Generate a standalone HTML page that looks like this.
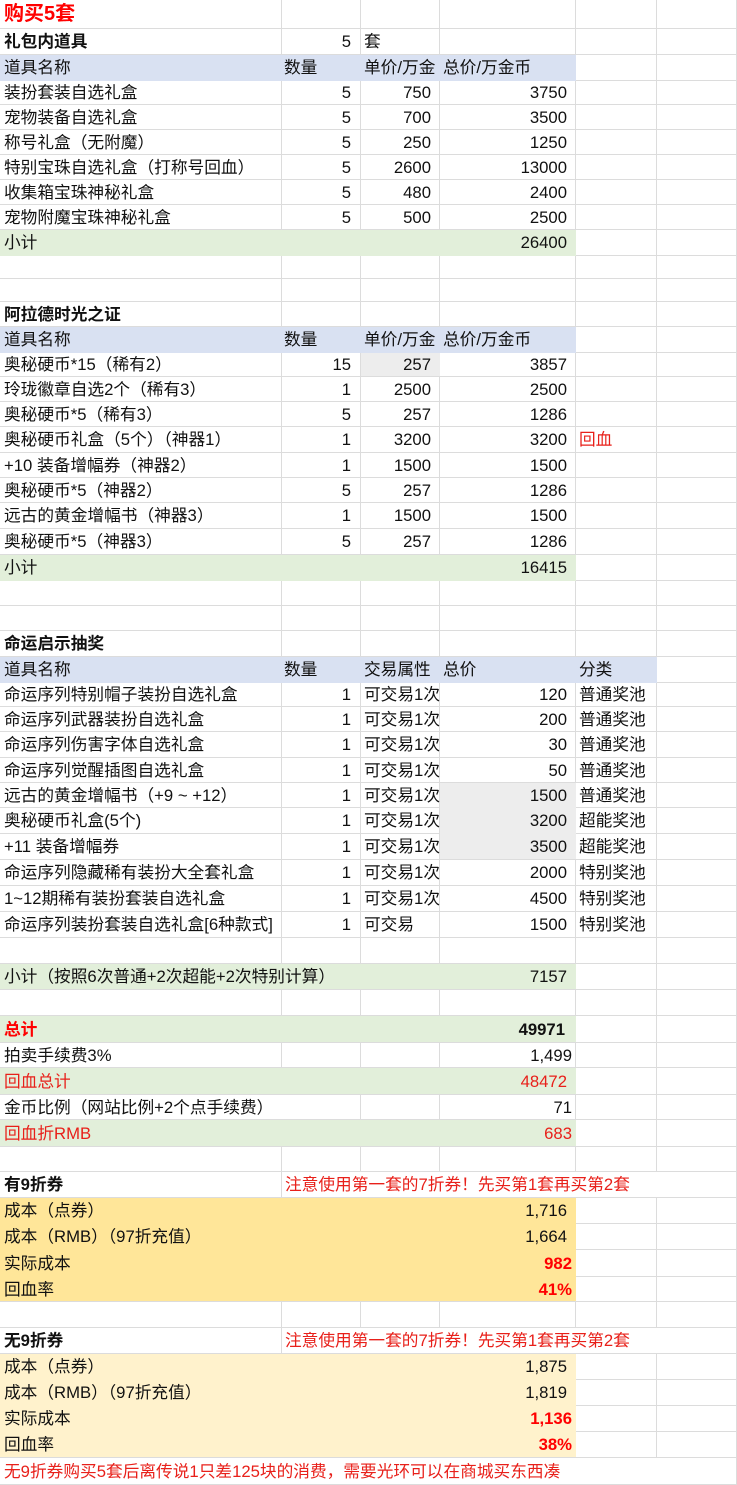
<!DOCTYPE html>
<html><head><meta charset="utf-8"><style>
*{margin:0;padding:0;box-sizing:border-box}
body{width:737px;height:1485px;position:relative;background:#fff;overflow:hidden;font-family:"Liberation Sans","Noto Sans CJK SC",sans-serif;font-size:16.7px;color:#111}
.v{position:absolute;top:0;width:1px;height:1485px;background:#dcdcdc}
.r{position:absolute;left:0;width:737px;border-bottom:1px solid #dcdcdc}
.r span{position:absolute;top:0;white-space:nowrap}
.bg{position:absolute;top:0;left:0;height:calc(100% + 1px);width:576px}
.g{background:#e2efda}.b{background:#d9e1f2}.o{background:#ffe699}.y{background:#fff2cc}.w{background:#fff;height:100%}
.bb{width:657px}
.gr3{position:absolute;top:0;height:100%;left:361px;width:79px;background:#ededed}
.gr4{position:absolute;top:0;height:calc(100% + 1px);left:440px;width:136px;background:#ededed}
.L{left:4px}.Q{right:386px}.C3{left:364px}.P{right:306px}.T{right:170px}.T2{right:165px}.C2{left:284px}.C4{left:443px}.C5{left:579px}.N{left:285px}
.bd{font-weight:bold}.red{color:#e8201a}.R{color:#ff0000;font-weight:bold}
</style></head><body>
<div class="v" style="left:281px"></div><div class="v" style="left:360px"></div><div class="v" style="left:439px"></div><div class="v" style="left:575px"></div><div class="v" style="left:656px"></div><div class="v" style="left:736px"></div>

<div class="r" style="top:0;height:29px;line-height:29px"><span class="L R" style="font-size:20px">购买5套</span></div>
<div class="r" style="top:29px;height:26px;line-height:26px"><span class="L bd">礼包内道具</span><span class="Q">5</span><span class="C3">套</span></div>
<div class="r" style="top:55px;height:26px;line-height:26px"><div class="bg b"></div><span class="L">道具名称</span><span class="C2">数量</span><span class="C3">单价/万金</span><span class="C4">总价/万金币</span></div>
<div class="r" style="top:81px;height:24px;line-height:24px"><span class="L">装扮套装自选礼盒</span><span class="Q">5</span><span class="P">750</span><span class="T">3750</span></div>
<div class="r" style="top:105px;height:25px;line-height:25px"><span class="L">宠物装备自选礼盒</span><span class="Q">5</span><span class="P">700</span><span class="T">3500</span></div>
<div class="r" style="top:130px;height:25px;line-height:25px"><span class="L">称号礼盒（无附魔）</span><span class="Q">5</span><span class="P">250</span><span class="T">1250</span></div>
<div class="r" style="top:155px;height:25px;line-height:25px"><span class="L">特别宝珠自选礼盒（打称号回血）</span><span class="Q">5</span><span class="P">2600</span><span class="T">13000</span></div>
<div class="r" style="top:180px;height:25px;line-height:25px"><span class="L">收集箱宝珠神秘礼盒</span><span class="Q">5</span><span class="P">480</span><span class="T">2400</span></div>
<div class="r" style="top:205px;height:25px;line-height:25px"><span class="L">宠物附魔宝珠神秘礼盒</span><span class="Q">5</span><span class="P">500</span><span class="T">2500</span></div>
<div class="r" style="top:230px;height:26px;line-height:26px"><div class="bg g"></div><span class="L">小计</span><span class="T">26400</span></div>
<div class="r" style="top:256px;height:23px"></div>
<div class="r" style="top:279px;height:23px"></div>
<div class="r" style="top:302px;height:25px;line-height:25px"><span class="L bd">阿拉德时光之证</span></div>
<div class="r" style="top:327px;height:26px;line-height:26px"><div class="bg b"></div><span class="L">道具名称</span><span class="C2">数量</span><span class="C3">单价/万金</span><span class="C4">总价/万金币</span></div>
<div class="r" style="top:353px;height:24px;line-height:24px"><div class="gr3"></div><span class="L">奥秘硬币*15（稀有2）</span><span class="Q">15</span><span class="P">257</span><span class="T">3857</span></div>
<div class="r" style="top:377px;height:25px;line-height:25px"><span class="L">玲珑徽章自选2个（稀有3）</span><span class="Q">1</span><span class="P">2500</span><span class="T">2500</span></div>
<div class="r" style="top:402px;height:25px;line-height:25px"><span class="L">奥秘硬币*5（稀有3）</span><span class="Q">5</span><span class="P">257</span><span class="T">1286</span></div>
<div class="r" style="top:427px;height:26px;line-height:26px"><span class="L">奥秘硬币礼盒（5个）（神器1）</span><span class="Q">1</span><span class="P">3200</span><span class="T">3200</span><span class="C5 red">回血</span></div>
<div class="r" style="top:453px;height:25px;line-height:25px"><span class="L">+10 装备增幅券（神器2）</span><span class="Q">1</span><span class="P">1500</span><span class="T">1500</span></div>
<div class="r" style="top:478px;height:25px;line-height:25px"><span class="L">奥秘硬币*5（神器2）</span><span class="Q">5</span><span class="P">257</span><span class="T">1286</span></div>
<div class="r" style="top:503px;height:26px;line-height:26px"><span class="L">远古的黄金增幅书（神器3）</span><span class="Q">1</span><span class="P">1500</span><span class="T">1500</span></div>
<div class="r" style="top:529px;height:26px;line-height:26px"><span class="L">奥秘硬币*5（神器3）</span><span class="Q">5</span><span class="P">257</span><span class="T">1286</span></div>
<div class="r" style="top:555px;height:26px;line-height:26px"><div class="bg g"></div><span class="L">小计</span><span class="T">16415</span></div>
<div class="r" style="top:581px;height:25px"></div>
<div class="r" style="top:606px;height:25px"></div>
<div class="r" style="top:631px;height:26px;line-height:26px"><span class="L bd">命运启示抽奖</span></div>
<div class="r" style="top:657px;height:26px;line-height:26px"><div class="bg b bb"></div><span class="L">道具名称</span><span class="C2">数量</span><span class="C3">交易属性</span><span class="C4">总价</span><span class="C5">分类</span></div>
<div class="r" style="top:683px;height:24px;line-height:24px"><span class="L">命运序列特别帽子装扮自选礼盒</span><span class="Q">1</span><span class="C3">可交易1次</span><span class="T">120</span><span class="C5">普通奖池</span></div>
<div class="r" style="top:707px;height:25px;line-height:25px"><span class="L">命运序列武器装扮自选礼盒</span><span class="Q">1</span><span class="C3">可交易1次</span><span class="T">200</span><span class="C5">普通奖池</span></div>
<div class="r" style="top:732px;height:26px;line-height:26px"><span class="L">命运序列伤害字体自选礼盒</span><span class="Q">1</span><span class="C3">可交易1次</span><span class="T">30</span><span class="C5">普通奖池</span></div>
<div class="r" style="top:758px;height:25px;line-height:25px"><span class="L">命运序列觉醒插图自选礼盒</span><span class="Q">1</span><span class="C3">可交易1次</span><span class="T">50</span><span class="C5">普通奖池</span></div>
<div class="r" style="top:783px;height:25px;line-height:25px"><div class="gr4"></div><span class="L">远古的黄金增幅书（+9 ~ +12）</span><span class="Q">1</span><span class="C3">可交易1次</span><span class="T">1500</span><span class="C5">普通奖池</span></div>
<div class="r" style="top:808px;height:26px;line-height:26px"><div class="gr4"></div><span class="L">奥秘硬币礼盒(5个)</span><span class="Q">1</span><span class="C3">可交易1次</span><span class="T">3200</span><span class="C5">超能奖池</span></div>
<div class="r" style="top:834px;height:26px;line-height:26px"><div class="gr4" style="height:100%"></div><span class="L">+11 装备增幅券</span><span class="Q">1</span><span class="C3">可交易1次</span><span class="T">3500</span><span class="C5">超能奖池</span></div>
<div class="r" style="top:860px;height:26px;line-height:26px"><span class="L">命运序列隐藏稀有装扮大全套礼盒</span><span class="Q">1</span><span class="C3">可交易1次</span><span class="T">2000</span><span class="C5">特别奖池</span></div>
<div class="r" style="top:886px;height:26px;line-height:26px"><span class="L">1~12期稀有装扮套装自选礼盒</span><span class="Q">1</span><span class="C3">可交易1次</span><span class="T">4500</span><span class="C5">特别奖池</span></div>
<div class="r" style="top:912px;height:26px;line-height:26px"><span class="L">命运序列装扮套装自选礼盒[6种款式]</span><span class="Q">1</span><span class="C3">可交易</span><span class="T">1500</span><span class="C5">特别奖池</span></div>
<div class="r" style="top:938px;height:26px"></div>
<div class="r" style="top:964px;height:26px;line-height:26px"><div class="bg g" style="height:100%"></div><span class="L">小计（按照6次普通+2次超能+2次特别计算）</span><span class="T">7157</span></div>
<div class="r" style="top:990px;height:26px"></div>
<div class="r" style="top:1016px;height:27px;line-height:27px"><div class="bg g" style="height:100%"></div><span class="L R">总计</span><span class="bd" style="right:172px">49971</span></div>
<div class="r" style="top:1043px;height:25px;line-height:25px"><span class="L">拍卖手续费3%</span><span class="T2">1,499</span></div>
<div class="r" style="top:1068px;height:27px;line-height:27px"><div class="bg g" style="height:100%"></div><span class="L red">回血总计</span><span class="T red">48472</span></div>
<div class="r" style="top:1095px;height:25px;line-height:25px"><div class="bg w" style="width:282px"></div><span class="L">金币比例（网站比例+2个点手续费）</span><span class="T2">71</span></div>
<div class="r" style="top:1120px;height:27px;line-height:27px"><div class="bg g" style="height:100%"></div><span class="L red">回血折RMB</span><span class="T2 red">683</span></div>
<div class="r" style="top:1147px;height:25px"></div>
<div class="r" style="top:1172px;height:26px;line-height:26px"><div class="bg w" style="left:282px;width:375px"></div><span class="L bd">有9折券</span><span class="N red">注意使用第一套的7折券！先买第1套再买第2套</span></div>
<div class="r" style="top:1198px;height:26px;line-height:26px"><div class="bg o"></div><span class="L">成本（点券）</span><span class="T">1,716</span></div>
<div class="r" style="top:1224px;height:26px;line-height:26px"><div class="bg o"></div><span class="L">成本（RMB）（97折充值）</span><span class="T">1,664</span></div>
<div class="r" style="top:1250px;height:27px;line-height:27px"><div class="bg o"></div><span class="L">实际成本</span><span class="T2 R">982</span></div>
<div class="r" style="top:1277px;height:25px;line-height:25px"><div class="bg o" style="height:100%"></div><span class="L">回血率</span><span class="T2 R">41%</span></div>
<div class="r" style="top:1302px;height:26px"></div>
<div class="r" style="top:1328px;height:26px;line-height:26px"><div class="bg w" style="left:282px;width:375px"></div><span class="L bd">无9折券</span><span class="N red">注意使用第一套的7折券！先买第1套再买第2套</span></div>
<div class="r" style="top:1354px;height:26px;line-height:26px"><div class="bg y"></div><span class="L">成本（点券）</span><span class="T">1,875</span></div>
<div class="r" style="top:1380px;height:26px;line-height:26px"><div class="bg y"></div><span class="L">成本（RMB）（97折充值）</span><span class="T">1,819</span></div>
<div class="r" style="top:1406px;height:26px;line-height:26px"><div class="bg y"></div><span class="L">实际成本</span><span class="T2 R">1,136</span></div>
<div class="r" style="top:1432px;height:26px;line-height:26px"><div class="bg y" style="height:100%"></div><span class="L">回血率</span><span class="T2 R">38%</span></div>
<div class="r" style="top:1458px;height:27px;line-height:27px"><div class="bg w" style="width:657px"></div><span class="L red">无9折券购买5套后离传说1只差125块的消费，需要光环可以在商城买东西凑</span></div>
</body></html>
